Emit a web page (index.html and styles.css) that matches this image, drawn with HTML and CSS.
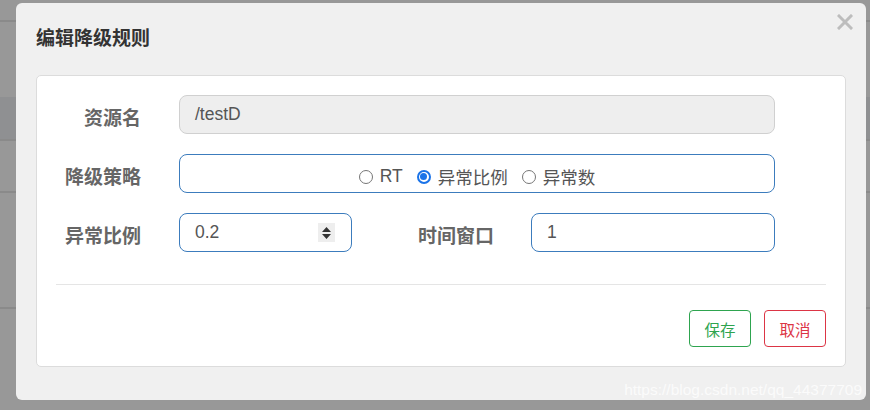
FILE: index.html
```html
<!DOCTYPE html>
<html lang="zh">
<head>
<meta charset="utf-8">
<link rel="stylesheet" href="styles.css">
</head>
<body>
<div class="backdrop">
  <div class="bg-row r1"></div>
  <div class="bg-row r2"></div>
  <div class="bg-row r3"></div>
  <div class="bg-row r4"></div>
  <div class="bg-row r5"></div>
  <div class="bg-row r6"></div>
</div>
<div class="modal">
  <div class="modal-header">
    <h4 class="modal-title">编辑降级规则</h4>
    <svg class="close" width="16" height="16" viewBox="0 0 16 16"><path d="M2 2 L14 14 M14 2 L2 14" stroke="#bdbdbd" stroke-width="3" stroke-linecap="square"/></svg>
  </div>
  <div class="card">
    <div class="row">
      <label class="lbl">资源名</label>
      <div class="input readonly wide">/testD</div>
    </div>
    <div class="row">
      <label class="lbl">降级策略</label>
      <div class="input active wide radios">
        <span class="opt"><span class="radio"></span>RT</span>
        <span class="opt"><span class="radio checked"></span>异常比例</span>
        <span class="opt"><span class="radio"></span>异常数</span>
      </div>
    </div>
    <div class="row">
      <label class="lbl">异常比例</label>
      <div class="input active small">
        <span class="val">0.2</span>
        <span class="spin"><svg width="11" height="14" viewBox="0 0 11 14"><path d="M5.5 1 L10 6 L1 6 Z M1 8 L10 8 L5.5 13 Z" fill="#333"/></svg></span>
      </div>
      <label class="lbl lbl2">时间窗口</label>
      <div class="input active mid">1</div>
    </div>
    <div class="divider"></div>
    <div class="footer">
      <button class="btn save">保存</button>
      <button class="btn cancel">取消</button>
    </div>
  </div>
  <div class="watermark">https://blog.csdn.net/qq_44377709</div>
</div>
</body>
</html>
```
FILE: styles.css
```css
html, body {
  margin: 0;
  padding: 0;
  width: 870px;
  height: 410px;
  overflow: hidden;
  background: #989898;
  font-family: "Liberation Sans", "Noto Sans CJK SC", sans-serif;
}
.backdrop {
  display: flex;
  flex-direction: column;
}
.bg-row { border-bottom: 2px solid #8a8a8a; box-sizing: border-box; }
.r1 { height: 22px; }
.r2 { height: 75px; border-bottom: none; }
.r3 { height: 44px; background: #8f9092; }
.r4 { height: 52px; }
.r5 { height: 116px; }
.r6 { height: 60px; border-bottom: none; }

.modal {
  position: absolute;
  left: 16px;
  top: 3px;
  width: 850px;
  height: 397px;
  background: #f0f0f0;
  border-radius: 6px;
  box-sizing: border-box;
  padding: 0 20px;
}
.modal-header {
  height: 72px;
  display: flex;
  align-items: center;
  justify-content: space-between;
  box-sizing: border-box;
}
.modal-title {
  margin: 0;
  font-size: 19px;
  font-weight: bold;
  color: #333;
  position: relative;
  top: -3px;
}
.close {
  position: relative;
  top: -17px;
  right: -7px;
}
.card {
  background: #fff;
  border: 1px solid #dcdcdc;
  border-radius: 5px;
  height: 292px;
  box-sizing: border-box;
  padding: 19px 19px 0 19px;
}
.row {
  display: flex;
  align-items: center;
  height: 39px;
  margin-bottom: 20px;
}
.lbl {
  width: 85px;
  text-align: right;
  font-size: 19px;
  font-weight: bold;
  color: #666;
  margin-right: 38px;
  position: relative;
  top: 2px;
}
.lbl2 {
  width: 142px;
  margin-right: 37px;
}
.input {
  height: 39px;
  box-sizing: border-box;
  border: 1px solid #ccc;
  border-radius: 8px;
  display: flex;
  align-items: center;
  padding: 0 15px;
  font-size: 17.5px;
  color: #555;
}
.readonly { background: #eee; border-color: #d0d0d0; }
.active { border-color: #3c7cbd; }
.wide { width: 596px; }
.small { width: 173px; justify-content: space-between; padding-right: 16px; }
.mid { width: 244px; }
.radios { justify-content: center; }
.opt {
  display: inline-flex;
  align-items: center;
  margin: 0 7px;
  color: #555;
  position: relative;
  top: 3px;
}
.radio {
  width: 14px;
  height: 14px;
  border: 1px solid #767676;
  border-radius: 50%;
  box-sizing: border-box;
  margin-right: 7px;
  position: relative;
}
.radio.checked {
  border: 2px solid #1a73e8;
}
.radio.checked::after {
  content: "";
  position: absolute;
  left: 1.5px;
  top: 1.5px;
  width: 7px;
  height: 7px;
  border-radius: 50%;
  background: #1a73e8;
}
.spin {
  width: 17px;
  height: 19px;
  background: #eee;
  display: flex;
  align-items: center;
  justify-content: center;
}
.divider {
  border-top: 1px solid #e5e5e5;
  margin-top: 32px;
}
.footer {
  display: flex;
  justify-content: flex-end;
  gap: 13px;
  margin-top: 25px;
}
.btn {
  width: 62px;
  height: 37px;
  background: #fff;
  border-radius: 4px;
  font-size: 15.5px;
  font-family: "Liberation Sans", "Noto Sans CJK SC", sans-serif;
  padding: 0;
  cursor: pointer;
}
.save { border: 1px solid #2ea44f; color: #2ea44f; }
.cancel { border: 1px solid #dc3545; color: #dc3545; }
.watermark {
  position: absolute;
  right: 4px;
  bottom: 1px;
  font-size: 15.5px;
  color: rgba(255,255,255,0.75);
}
```
